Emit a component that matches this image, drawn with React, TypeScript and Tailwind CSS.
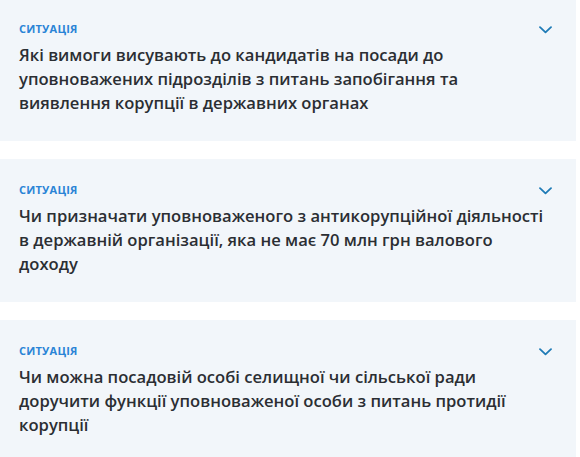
import React from "react";

const ITEMS = [
  "Які вимоги висувають до кандидатів на посади до уповноважених підрозділів з питань запобігання та виявлення корупції в державних органах",
  "Чи призначати уповноваженого з антикорупційної діяльності в державній організації, яка не має 70 млн грн валового доходу",
  "Чи можна посадовій особі селищної чи сільської ради доручити функції уповноваженої особи з питань протидії корупції",
];

const Chevron = () => (
  <svg width="13" height="8" viewBox="0 0 13 8" fill="none" className="mt-[1px] text-[#1f7bb6]">
    <path d="M1 1.2l5.5 5.2 5.5-5.2" stroke="currentColor" strokeWidth="1.8" strokeLinecap="round" strokeLinejoin="round" />
  </svg>
);

const SituationCard = ({ title }: { title: string }) => (
  <div className="bg-[#f2f6fa] h-[143px] pl-[19px] pr-[24px] pt-[24px]">
    <div className="flex items-center justify-between">
      <span className="text-[11px] font-bold uppercase tracking-[0.02em] text-[#2a84d6] leading-[14px]">
        Ситуація
      </span>
      <Chevron />
    </div>
    <p className="mt-[7px] max-w-[527px] text-[16.6px] font-semibold leading-[24px] text-[#2b2e33]">{title}</p>
  </div>
);

export default function App() {
  return (
    <div className="w-[580px] h-[457px] overflow-hidden bg-white font-['Open_Sans',sans-serif]">
      <div className="w-[576px] -mt-[2px] flex flex-col gap-[18px]">
        {ITEMS.map((t) => (
          <SituationCard key={t} title={t} />
        ))}
      </div>
    </div>
  );
}
